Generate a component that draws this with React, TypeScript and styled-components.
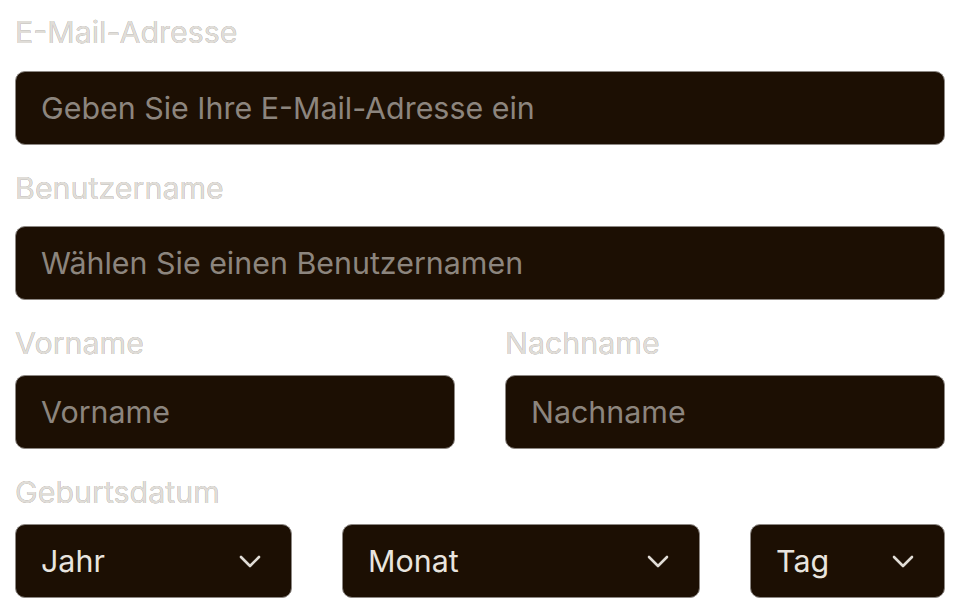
import styled, { createGlobalStyle } from "styled-components";

const GlobalStyle = createGlobalStyle`
    html, body {
        margin: 0;
        padding: 0;
        background: #ffffff;
        font-family: Inter, "Liberation Sans", sans-serif;
    }
`;

const Form = styled.form`
    display: flex;
    flex-direction: column;
    gap: 25px;
    padding: 14px 11px 0 15px;
`;

const Field = styled.div<{ $gap: number }>`
    display: flex;
    flex-direction: column;
    gap: ${(props) => props.$gap}px;
    min-width: 0;
`;

const Label = styled.label`
    font-size: 30.4px;
    line-height: 36px;
    color: #e0ddd8;
    text-shadow: 0 0 0.6px rgba(100, 95, 90, 0.8);
`;

const Input = styled.input`
    box-sizing: border-box;
    width: 100%;
    height: 74px;
    padding: 0 25px;
    border: 1.5px solid #8d8884;
    border-radius: 10px;
    background: #1c0f03;
    color: #e8e4df;
    font-family: inherit;
    font-size: 30.4px;
    outline: none;

    &::placeholder {
        color: #8c857e;
    }
`;

const Row = styled.div<{ $cols: string }>`
    display: grid;
    grid-template-columns: ${(props) => props.$cols};
    column-gap: 50px;
`;

const Select = styled.div`
    box-sizing: border-box;
    height: 74px;
    display: flex;
    align-items: center;
    justify-content: space-between;
    padding: 0 30px 0 25px;
    border: 1.5px solid #8d8884;
    border-radius: 10px;
    background: #1c0f03;
    color: #e8e4df;
    font-size: 30.4px;
`;

function Chevron() {
    return (
        <svg width="22" height="13" viewBox="0 0 22 13" fill="none">
            <polyline
                points="2,2 11,11 20,2"
                stroke="#e0dcd6"
                strokeWidth="2.6"
                strokeLinecap="round"
                strokeLinejoin="round"
            />
        </svg>
    );
}

function Dropdown({ label }: { label: string }) {
    return (
        <Select>
            <span>{label}</span>
            <Chevron />
        </Select>
    );
}

function App() {
    return (
        <>
            <GlobalStyle />
            <Form>
                <Field $gap={21}>
                    <Label>E-Mail-Adresse</Label>
                    <Input placeholder="Geben Sie Ihre E-Mail-Adresse ein" />
                </Field>
                <Field $gap={20}>
                    <Label>Benutzername</Label>
                    <Input placeholder="Wählen Sie einen Benutzernamen" />
                </Field>
                <Row $cols="1fr 1fr">
                    <Field $gap={14}>
                        <Label>Vorname</Label>
                        <Input placeholder="Vorname" />
                    </Field>
                    <Field $gap={14}>
                        <Label>Nachname</Label>
                        <Input placeholder="Nachname" />
                    </Field>
                </Row>
                <Field $gap={14}>
                    <Label>Geburtsdatum</Label>
                    <Row $cols="277px 358px 1fr">
                        <Dropdown label="Jahr" />
                        <Dropdown label="Monat" />
                        <Dropdown label="Tag" />
                    </Row>
                </Field>
            </Form>
        </>
    );
}
export default App;
